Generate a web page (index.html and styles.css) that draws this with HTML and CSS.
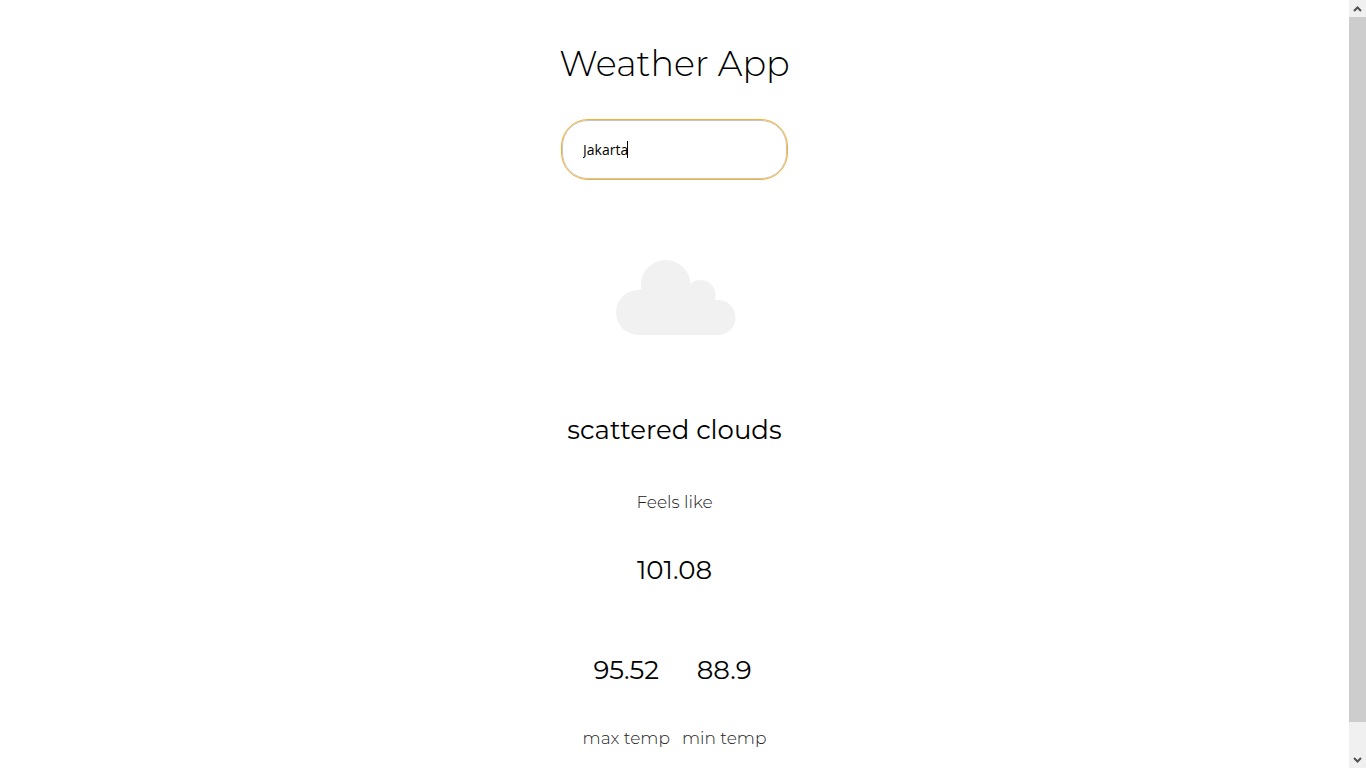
FILE: index.html
```html
<!DOCTYPE html>
<html lang="en">
<head>
<meta charset="utf-8">
<meta name="viewport" content="width=device-width, initial-scale=1">
<title>Weather App</title>
<link rel="stylesheet" href="styles.css">
</head>
<body>
<div class="page">
  <main class="weather">
    <h1 class="title">Weather App</h1>
    <form class="search">
      <input class="search-input" type="text" aria-label="City" value="Jakarta">
      <span class="caret"></span>
    </form>
    <svg class="cloud" viewBox="0 0 120 75" aria-hidden="true">
      <circle cx="22.500" cy="52.500" r="22.500"/>
      <circle cx="49.700" cy="24.800" r="24.800"/>
      <circle cx="84.500" cy="35" r="15"/>
      <circle cx="102" cy="57.500" r="17.500"/>
      <path d="M22.500 75V30L50 22L75 24L99 40L102 75Z"/>
    </svg>
    <h2 class="value condition">scattered clouds</h2>
    <p class="label">Feels like</p>
    <p class="value feels">101.08</p>
    <div class="temps">
      <div class="temp">
        <p class="value">95.52</p>
        <p class="label">max temp</p>
      </div>
      <div class="temp">
        <p class="value">88.9</p>
        <p class="label">min temp</p>
      </div>
    </div>
  </main>
  <div class="scrollbar">
    <button class="scroll-button" type="button" aria-label="Scroll up">
      <svg class="arrow" viewBox="0 0 9 6"><path d="M1 5L4.500 1.500L8 5"/></svg>
    </button>
    <div class="scroll-track"><div class="scroll-thumb"></div></div>
    <button class="scroll-button" type="button" aria-label="Scroll down">
      <svg class="arrow" viewBox="0 0 9 6"><path d="M1 1L4.500 4.500L8 1"/></svg>
    </button>
  </div>
</div>
</body>
</html>
```
FILE: styles.css
```css
* {
  box-sizing: border-box;
}

body {
  margin: 0;
  background: #fff;
  color: #000;
  font-family: Montserrat, Inter, sans-serif;
}

h1, h2, p {
  margin: 0;
}

.page {
  display: flex;
  min-height: 100vh;
}

.weather {
  flex: 1;
  display: flex;
  flex-direction: column;
  align-items: center;
  padding-top: 40px;
}

.title {
  font-size: 35px;
  font-weight: 300;
  line-height: 48px;
}

.search {
  position: relative;
  margin-top: 32px;
}

.search-input {
  display: block;
  width: 225px;
  height: 59px;
  padding: 0 20px;
  border: 1px solid #c4c4c4;
  border-radius: 26px;
  outline: 1px solid #f5b22d;
  background: #fff;
  color: #000;
  font-family: "Open Sans", sans-serif;
  font-size: 14px;
}

.caret {
  position: absolute;
  top: 21px;
  left: 65px;
  width: 1px;
  height: 17px;
  background: #000;
}

.cloud {
  width: 120px;
  height: 75px;
  margin-top: 81px;
  margin-left: 2px;
  fill: #f1f1f1;
}

.value {
  font-size: 26px;
  font-weight: 400;
  line-height: 32px;
}

.label {
  font-size: 17px;
  font-weight: 300;
  line-height: 24px;
  color: #222;
}

.condition {
  margin: 79px 0 44px;
}

.feels {
  margin-top: 40px;
}

.temps {
  display: flex;
  gap: 12px;
  margin-top: 68px;
}

.temp {
  display: flex;
  flex-direction: column;
  align-items: center;
  gap: 40px;
}

.scrollbar {
  position: sticky;
  top: 0;
  display: flex;
  flex-direction: column;
  width: 17px;
  height: 100vh;
  background: #f0f0f0;
}

.scroll-button {
  display: flex;
  align-items: center;
  justify-content: center;
  height: 17px;
  padding: 0;
  border: 0;
  background: #f0f0f0;
}

.arrow {
  width: 9px;
  height: 6px;
  fill: none;
  stroke: #505050;
  stroke-width: 2;
}

.scroll-track {
  flex: 1;
}

.scroll-thumb {
  height: 96%;
  background: #cdcdcd;
}
```
